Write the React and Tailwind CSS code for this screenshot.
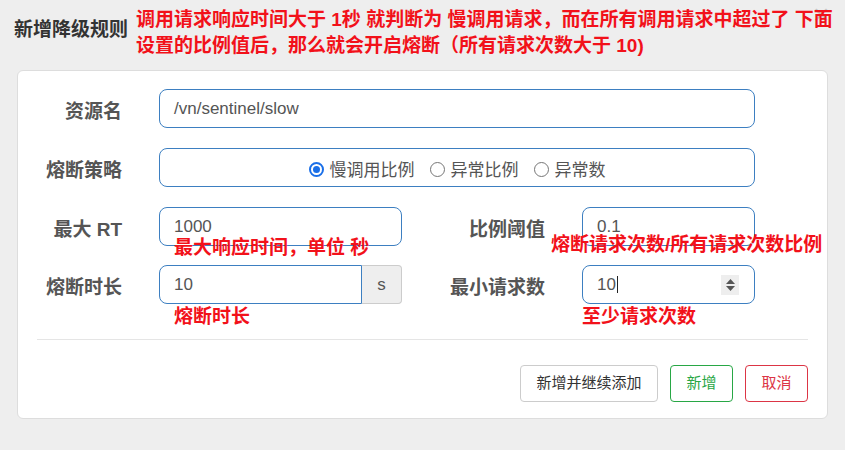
import React from 'react';

const font = "font-['Liberation_Sans','Noto_Sans_CJK_SC',sans-serif]";

const Radio = ({ checked, label }) => (
    <label className="flex items-center gap-[6px]">
        {checked ? (
            <span className="w-[15px] h-[15px] rounded-full border-[2px] border-[#1a6fe8] flex items-center justify-center">
                <span className="w-[7px] h-[7px] rounded-full bg-[#1a6fe8]"></span>
            </span>
        ) : (
            <span className="w-[15px] h-[15px] rounded-full border border-[#767676] bg-white"></span>
        )}
        <span className="text-[17px] text-[#555] leading-[22px] pt-[2px]">{label}</span>
    </label>
);

const Label = ({ children, className = '' }) => (
    <div className={`text-right text-[19px] font-bold text-[#555] h-[39px] leading-[45px] ${className}`}>{children}</div>
);

const Note = ({ children, className = '' }) => (
    <div className={`text-[19px] font-bold text-[#f2111a] leading-[26px] whitespace-nowrap ${className}`}>{children}</div>
);

const inputBox = 'h-[39px] border border-[#3d7fc1] bg-white flex items-center px-[14px] text-[17px] text-[#555]';

const App = () => {
    return (
        <div className={`relative w-[845px] h-[450px] bg-[#eeeeee] overflow-hidden ${font}`}>
            <div className="absolute left-[813px] top-[-1px] text-[28px] leading-[32px] text-[#c4c4c4]">×</div>

            {/* header */}
            <div className="relative flex items-start pl-[14px] pt-[7px]">
                <div className="mt-[10px] text-[19px] leading-[26px] font-bold text-[#333] shrink-0">新增降级规则</div>
                <Note className="ml-[8px]">
                    调用请求响应时间大于 1秒 就判断为 慢调用请求，而在所有调用请求中超过了 下面
                    <br />
                    设置的比例值后，那么就会开启熔断（所有请求次数大于 10)
                </Note>
            </div>

            {/* card */}
            <div className="mt-[11px] ml-[17px] w-[811px] h-[349px] bg-white border border-[#dddddd] rounded-[6px] pt-[18px]">
                <div className="flex items-center">
                    <Label className="w-[104px]">资源名</Label>
                    <div className={`ml-[37px] w-[596px] rounded-[8px] ${inputBox}`}>/vn/sentinel/slow</div>
                </div>

                <div className="flex items-center mt-[20px]">
                    <Label className="w-[104px]">熔断策略</Label>
                    <div className="ml-[37px] w-[596px] h-[39px] rounded-[8px] border border-[#3d7fc1] flex items-center justify-center gap-[15px] pt-[4px]">
                        <Radio checked label="慢调用比例" />
                        <Radio label="异常比例" />
                        <Radio label="异常数" />
                    </div>
                </div>

                <div className="flex items-center mt-[20px]">
                    <Label className="w-[104px]">最大 RT</Label>
                    <div className="relative ml-[37px]">
                        <div className={`w-[243px] rounded-[8px] ${inputBox}`}>1000</div>
                        <Note className="absolute left-[15px] top-[28px]">最大响应时间，单位 秒</Note>
                    </div>
                    <Label className="w-[143px]">比例阈值</Label>
                    <div className="relative ml-[37px]">
                        <div className={`w-[173px] rounded-[8px] ${inputBox}`}>0.1</div>
                        <Note className="absolute left-[-31px] top-[25px]">熔断请求次数/所有请求次数比例</Note>
                    </div>
                </div>

                <div className="flex items-start mt-[19px]">
                    <Label className="w-[104px]">熔断时长</Label>
                    <div className="ml-[37px] flex flex-col">
                        <div className="flex">
                            <div className={`w-[203px] rounded-l-[8px] ${inputBox}`}>10</div>
                            <div className="w-[40px] h-[39px] bg-[#eeeeee] border border-l-0 border-[#cccccc] rounded-r-[4px] flex items-center justify-center text-[17px] text-[#555]">s</div>
                        </div>
                        <Note className="pl-[15px] leading-[24px]">熔断时长</Note>
                    </div>
                    <Label className="w-[143px]">最小请求数</Label>
                    <div className="ml-[37px] flex flex-col">
                        <div className={`w-[173px] rounded-[8px] ${inputBox} justify-between pr-[15px]`}>
                            <span className="flex items-center">
                                10
                                <span className="w-px h-[17px] bg-[#222] ml-[1px]"></span>
                            </span>
                            <span className="w-[18px] h-[20px] bg-[#eeeeee] flex flex-col items-center justify-center gap-[2px]">
                                <svg width="9" height="5" viewBox="0 0 9 5"><path d="M0 5 L4.5 0 L9 5 Z" fill="#555" /></svg>
                                <svg width="9" height="5" viewBox="0 0 9 5"><path d="M0 0 L4.5 5 L9 0 Z" fill="#555" /></svg>
                            </span>
                        </div>
                        <Note className="leading-[24px]">至少请求次数</Note>
                    </div>
                </div>

                <div className="mx-[19px] mt-[9px] h-px bg-[#e5e5e5]"></div>

                <div className="flex justify-end gap-[12px] pr-[19px] mt-[25px] text-[15px]">
                    <button className="w-[138px] h-[37px] border border-[#cccccc] rounded-[4px] text-[#333] bg-white">新增并继续添加</button>
                    <button className="w-[63px] h-[37px] border border-[#28a745] rounded-[4px] text-[#28a745] bg-white">新增</button>
                    <button className="w-[63px] h-[37px] border border-[#dc3545] rounded-[4px] text-[#dc3545] bg-white">取消</button>
                </div>
            </div>
        </div>
    );
};

export default App;
